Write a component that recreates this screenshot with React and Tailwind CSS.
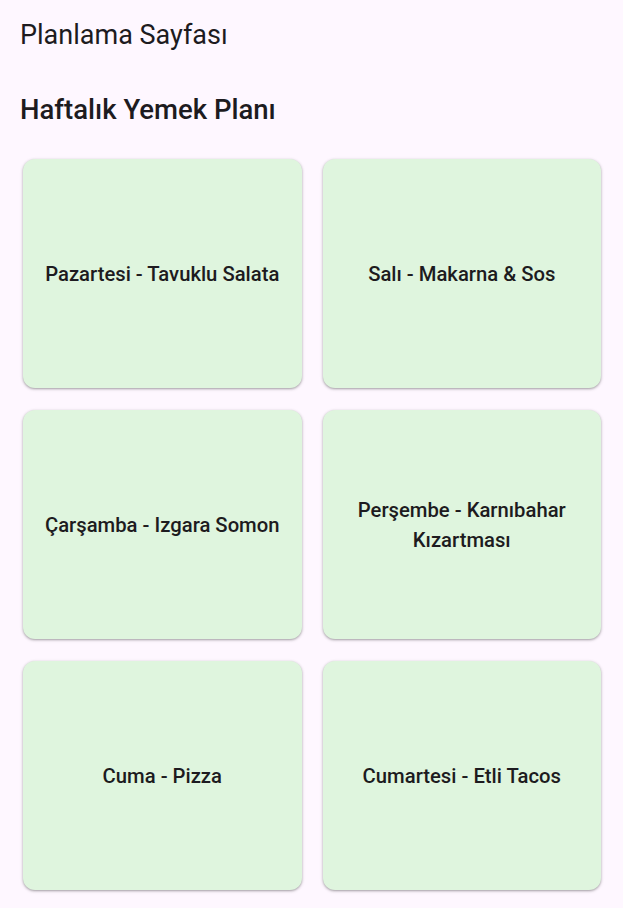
const MEALS = [
  "Pazartesi - Tavuklu Salata",
  "Salı - Makarna & Sos",
  "Çarşamba - Izgara Somon",
  "Perşembe - Karnıbahar Kızartması",
  "Cuma - Pizza",
  "Cumartesi - Etli Tacos",
];

export default function App() {
  return (
    <div
      className="min-h-screen bg-[#fef7ff] text-[#1d1b20]"
      style={{ fontFamily: "Roboto, 'Noto Sans', sans-serif" }}
    >
      {/* App bar */}
      <header className="h-[70px] flex items-center px-5">
        <h1 className="text-[27px] font-normal leading-10">Planlama Sayfası</h1>
      </header>

      <div className="px-5 pt-6">
        <h2 className="text-[27.5px] font-medium leading-8">Haftalık Yemek Planı</h2>
      </div>

      {/* Plan grid */}
      <div className="grid grid-cols-2 gap-x-[21px] gap-y-[22px] pl-[23px] pr-[22px] pt-[33px]">
        {MEALS.map((meal) => (
          <div
            key={meal}
            className="h-[229px] rounded-xl bg-[#dff5de] flex items-center justify-center px-4 text-center shadow-[0_1px_2px_rgba(0,0,0,0.25),0_1px_3px_1px_rgba(0,0,0,0.1)]"
          >
            <p className="text-[20.25px] font-medium leading-[30px]">{meal}</p>
          </div>
        ))}
      </div>
    </div>
  );
}
